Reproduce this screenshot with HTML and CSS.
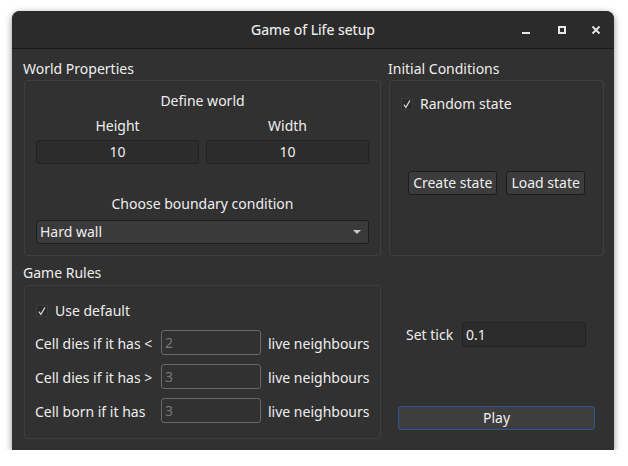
FILE: index.html
```html
<!DOCTYPE html>
<html>
<head>
<meta charset="utf-8">
<link rel="stylesheet" href="styles.css">
</head>
<body>
<div class="window">
  <div class="titlebar">
    <div></div>
    <div class="title">Game of Life setup</div>
    <div class="controls">
      <svg class="ctl" width="16" height="16" viewBox="0 0 16 16"><rect x="4" y="10" width="8" height="2" fill="#e8e8e8"/></svg>
      <svg class="ctl ctl-max" width="16" height="16" viewBox="0 0 16 16"><rect x="5" y="5" width="6" height="6" fill="none" stroke="#e8e8e8" stroke-width="2"/></svg>
      <svg class="ctl ctl-close" width="16" height="16" viewBox="0 0 16 16"><path d="M4.5 4.5 L11.5 11.5 M11.5 4.5 L4.5 11.5" stroke="#e8e8e8" stroke-width="1.8" fill="none"/></svg>
    </div>
  </div>
  <div class="content">
    <div class="col">
      <div class="glabel">World Properties</div>
      <div class="group world">
        <div class="center-label define">Define world</div>
        <div class="pair labels">
          <div class="center-label">Height</div>
          <div class="center-label">Width</div>
        </div>
        <div class="pair inputs">
          <div class="field">10</div>
          <div class="field">10</div>
        </div>
        <div class="center-label choose">Choose boundary condition</div>
        <div class="combo"><span>Hard wall</span><span class="arrow"></span></div>
      </div>
    </div>
    <div class="col">
      <div class="glabel">Initial Conditions</div>
      <div class="group initial">
        <div class="check-row"><svg class="checkbox" width="12" height="12" viewBox="0 0 12 12"><rect x="0.5" y="0.5" width="11" height="11" fill="#2a2a2a" stroke="#3b3b3b"/><path d="M2.8 6.6 L4.9 9.4 L9 2.4" fill="none" stroke="#d2d2d2" stroke-width="1.2"/></svg><span>Random state</span></div>
        <div class="buttons">
          <div class="btn">Create state</div>
          <div class="btn">Load state</div>
        </div>
      </div>
    </div>
    <div class="col">
      <div class="glabel">Game Rules</div>
      <div class="group rules">
        <div class="check-row"><svg class="checkbox" width="12" height="12" viewBox="0 0 12 12"><rect x="0.5" y="0.5" width="11" height="11" fill="#2a2a2a" stroke="#3b3b3b"/><path d="M2.8 6.6 L4.9 9.4 L9 2.4" fill="none" stroke="#d2d2d2" stroke-width="1.2"/></svg><span>Use default</span></div>
        <div class="rule first"><span class="rule-label">Cell dies if it has &lt;</span><div class="dfield">2</div><span class="rule-text">live neighbours</span></div>
        <div class="rule"><span class="rule-label">Cell dies if it has &gt;</span><div class="dfield">3</div><span class="rule-text">live neighbours</span></div>
        <div class="rule"><span class="rule-label">Cell born if it has</span><div class="dfield">3</div><span class="rule-text">live neighbours</span></div>
      </div>
    </div>
    <div class="col side">
      <div class="tick-row"><span class="tick-label">Set tick</span><div class="tfield">0.1</div></div>
      <div class="btn play">Play</div>
    </div>
  </div>
</div>
</body>
</html>
```
FILE: styles.css
```css
html, body {
  margin: 0;
  padding: 0;
  background: #ffffff;
}
body {
  font-family: "Noto Sans", "Open Sans", sans-serif;
  font-size: 14px;
  color: #eeeeee;
}
.window {
  margin: 11px 0 0 12px;
  width: 602px;
  height: 439px;
  background: #313131;
  border-radius: 8px 8px 0 0;
  box-shadow: 0 2px 7px rgba(0,0,0,0.45);
  overflow: hidden;
}
.titlebar {
  height: 37px;
  background: #2b2b2b;
  border-bottom: 1px solid #1a1a1a;
  display: grid;
  grid-template-columns: 1fr auto 1fr;
  align-items: center;
}
.title {
  color: #f2f2f2;
  font-size: 14px;
  -webkit-text-stroke: 0.1px #f2f2f2;
}
.controls {
  display: flex;
  justify-content: flex-end;
  align-items: center;
  padding-right: 10px;
  gap: 20px;
}
.ctl-close { margin-left: -2px; }
.content {
  display: grid;
  grid-template-columns: 358px 216px;
  column-gap: 7px;
  row-gap: 7px;
  padding: 10px 10px 0 11px;
}
.col {
  display: flex;
  flex-direction: column;
}
.glabel {
  line-height: 20px;
  height: 20px;
}
.group {
  margin-left: 1px;
  margin-top: 1px;
  border: 1px solid #3e3e3e;
  border-radius: 3px;
  box-sizing: border-box;
}
.world {
  height: 176px;
  padding: 11px 11px 0 11px;
}
.center-label {
  text-align: center;
  line-height: 18px;
}
.pair {
  display: grid;
  grid-template-columns: 163px 163px;
  column-gap: 7px;
}
.labels { margin-top: 7px; }
.inputs { margin-top: 5px; }
.field {
  height: 24px;
  box-sizing: border-box;
  background: #2c2c2c;
  border: 1px solid #222222;
  border-radius: 3px;
  text-align: center;
  line-height: 22px;
}
.choose { margin-top: 31px; }
.combo {
  margin-top: 7px;
  width: 333px;
  height: 24px;
  box-sizing: border-box;
  background: #3a3a3a;
  border: 1px solid #1d1d1d;
  border-radius: 3px;
  display: flex;
  align-items: center;
  justify-content: space-between;
  padding: 0 7px 0 3px;
  line-height: 22px;
}
.arrow {
  width: 0;
  height: 0;
  border-left: 4px solid transparent;
  border-right: 4px solid transparent;
  border-top: 4px solid #c8c8c8;
}
.initial {
  height: 176px;
  padding: 14px 11px 0 11px;
}
.check-row {
  display: flex;
  align-items: center;
  height: 18px;
  line-height: 18px;
}
.checkbox {
  flex: none;
  margin-right: 7px;
}
.buttons {
  margin-top: 58px;
  display: flex;
  justify-content: center;
  gap: 9px;
}
.btn {
  height: 24px;
  box-sizing: border-box;
  background: #3c3c3c;
  border: 1px solid #1c1c1c;
  border-radius: 3px;
  padding: 0 4px;
  line-height: 22px;
  text-align: center;
}
.rules {
  margin-top: 2px;
  height: 154px;
  padding: 16px 10px 0 11px;
}
.rule {
  display: flex;
  align-items: center;
  margin-top: 9px;
  height: 25px;
}
.rule.first { margin-top: 10px; }
.rules .rule { margin-left: -1px; }
.rule-label {
  width: 126px;
  padding-top: 2px;
}
.rule-text {
  padding-top: 2px;
}
.dfield {
  width: 100px;
  height: 25px;
  box-sizing: border-box;
  border: 1px solid #686868;
  border-radius: 3px;
  color: #777777;
  padding-left: 3px;
  line-height: 23px;
  margin-right: 7px;
}
.side {
  padding-left: 10px;
}
.tick-row {
  margin-top: 59px;
  display: flex;
  align-items: center;
  padding-left: 8px;
  height: 25px;
}
.tick-label {
  width: 56px;
}
.tfield {
  width: 124px;
  height: 25px;
  box-sizing: border-box;
  background: #2c2c2c;
  border: 1px solid #222222;
  border-radius: 3px;
  padding-left: 3px;
  line-height: 23px;
}
.play {
  margin-top: 59px;
  width: 197px;
  background: #3e3e3e;
  border-color: #2b5797;
}
```
